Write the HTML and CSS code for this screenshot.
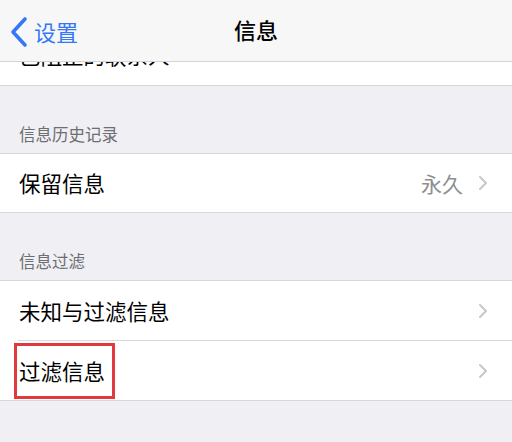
FILE: index.html
```html
<!DOCTYPE html>
<html lang="zh-CN">
  <head>
    <meta charset="UTF-8" />
    <meta name="viewport" content="width=device-width, initial-scale=1.0" />
    <title>信息</title>
    <link rel="stylesheet" href="styles.css">
  </head>
  <body>
    <div class="nav-bar">
      <div class="back">
        <svg class="back-icon" width="20" height="32" viewBox="0 0 20 32">
          <polyline points="16,3 4,16 16,29" fill="none" stroke="#3478f6" stroke-width="3.6" stroke-linecap="round" stroke-linejoin="round" />
        </svg>
        <span>设置</span>
      </div>
      <div class="title">信息</div>
    </div>

    <div class="settings">
      <div class="group top-group">
        <div class="row">
          <span class="row-label">已阻止的联系人</span>
          <svg class="chevron" width="10" height="16" viewBox="0 0 10 16">
            <polyline points="2,2 8,8 2,14" fill="none" stroke="#c7c7cc" stroke-width="2" stroke-linecap="round" stroke-linejoin="round" />
          </svg>
        </div>
      </div>

      <div class="section-header">信息历史记录</div>
      <div class="group">
        <div class="row short">
          <span class="row-label">保留信息</span>
          <span class="row-value">永久</span>
          <svg class="chevron" width="10" height="16" viewBox="0 0 10 16">
            <polyline points="2,2 8,8 2,14" fill="none" stroke="#c7c7cc" stroke-width="2" stroke-linecap="round" stroke-linejoin="round" />
          </svg>
        </div>
      </div>

      <div class="section-header">信息过滤</div>
      <div class="group">
        <div class="row">
          <span class="row-label">未知与过滤信息</span>
          <svg class="chevron" width="10" height="16" viewBox="0 0 10 16">
            <polyline points="2,2 8,8 2,14" fill="none" stroke="#c7c7cc" stroke-width="2" stroke-linecap="round" stroke-linejoin="round" />
          </svg>
        </div>
        <div class="row">
          <span class="row-label highlight">过滤信息</span>
          <svg class="chevron" width="10" height="16" viewBox="0 0 10 16">
            <polyline points="2,2 8,8 2,14" fill="none" stroke="#c7c7cc" stroke-width="2" stroke-linecap="round" stroke-linejoin="round" />
          </svg>
        </div>
      </div>
    </div>
  </body>
</html>
```

FILE: styles.css
```css
body {
  margin: 0;
  background: #efeff4;
  font-family: "Noto Sans CJK SC", "Noto Sans", sans-serif;
  color: #000;
  height: 442px;
  overflow: hidden;
}

.nav-bar {
  position: absolute;
  top: 0;
  left: 0;
  right: 0;
  height: 61px;
  background: #f7f7f7;
  border-bottom: 1px solid #d4d4d6;
  display: flex;
  align-items: center;
  justify-content: center;
  z-index: 2;
}

.back {
  position: absolute;
  left: 9px;
  top: 16px;
  display: flex;
  align-items: center;
  color: #3478f6;
  font-size: 22px;
  line-height: 32px;
}

.back-icon {
  margin-right: 5px;
}

.back span {
  margin-top: -3px;
}

.title {
  font-size: 22px;
  font-weight: 500;
  margin-top: -3px;
}

.settings {
  padding-top: 25px;
}

.group {
  background: #fff;
  border-top: 1px solid #d8d8dc;
  border-bottom: 1px solid #d8d8dc;
}

.top-group {
  border-top: none;
}

.row {
  height: 59px;
  display: flex;
  align-items: center;
  padding: 0 24px 0 19px;
  position: relative;
}

.row.short {
  height: 58px;
}

.row + .row::before {
  content: "";
  position: absolute;
  top: -1px;
  left: 18px;
  right: 0;
  border-top: 1px solid #d8d8dc;
}

.top-group .row {
  height: 60px;
}

.row + .row {
  margin-top: 1px;
}

.row-label {
  flex: 1;
  font-size: 21.5px;
  line-height: 30px;
}

.row-value {
  font-size: 21px;
  color: #8e8e93;
  margin-right: 15px;
}

.chevron {
  flex-shrink: 0;
}

.section-header {
  height: 67px;
  box-sizing: border-box;
  padding: 0 19px 7px;
  display: flex;
  align-items: flex-end;
  font-size: 16.5px;
  color: #6d6d72;
}

.highlight {
  flex: 0 0 auto;
  margin-left: -5px;
  margin-right: auto;
  padding: 10px 7px 10px 2px;
  border: 3px solid #e0393e;
}
```
